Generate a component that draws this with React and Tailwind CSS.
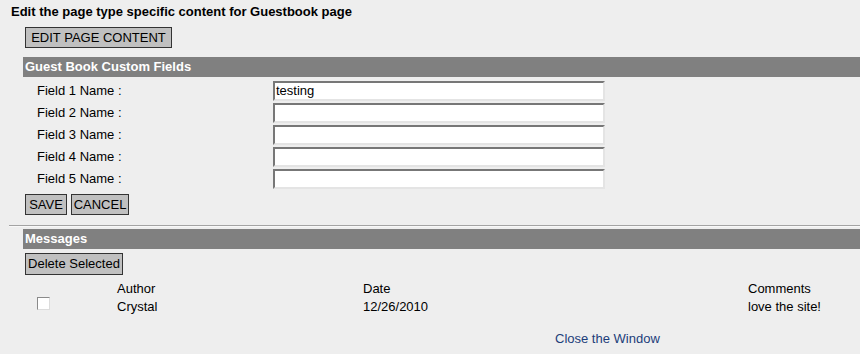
import React from "react";

const btn =
  "h-[21px] border border-[#333333] bg-[#c0c0c0] text-[13px] leading-[19px] text-black text-center";

function Field({ label, value }) {
  return (
    <div className="flex h-[20px] items-center">
      <div className="w-[273px] pb-[2px] pl-[37px] leading-[15px]">{label}</div>
      <div className="box-border h-[20px] w-[332px] border-2 border-t-[#777777] border-l-[#777777] border-b-[#e4e4e4] border-r-[#e4e4e4] bg-white pl-[1px] leading-[16px]">
        {value}
      </div>
    </div>
  );
}

function Bar({ children }) {
  return (
    <div className="ml-[23px] h-[20px] bg-[#808080] pl-[2px] font-bold leading-[20px] text-white">
      {children}
    </div>
  );
}

export default function App() {
  return (
    <div className="min-h-[354px] w-[860px] bg-[#eeeeee] font-['Liberation_Sans',Arial,sans-serif] text-[13px] text-black">
      <div className="pt-[4px] pl-[11px] font-bold leading-[15px]">
        Edit the page type specific content for Guestbook page
      </div>
      <div className="mt-[8px] pl-[25px]">
        <button className={btn + " w-[147px]"}>EDIT PAGE CONTENT</button>
      </div>
      <div className="mt-[9px]">
        <Bar>Guest Book Custom Fields</Bar>
      </div>
      <div className="mt-[4px] flex flex-col gap-[2px]">
        <Field label="Field 1 Name :" value="testing" />
        <Field label="Field 2 Name :" value="" />
        <Field label="Field 3 Name :" value="" />
        <Field label="Field 4 Name :" value="" />
        <Field label="Field 5 Name :" value="" />
      </div>
      <div className="mt-[5px] flex gap-[4px] pl-[25px]">
        <button className={btn + " w-[42px]"}>SAVE</button>
        <button className={btn + " w-[58px]"}>CANCEL</button>
      </div>
      <div className="ml-[9px] mt-[10px] h-[2px] border-t border-t-[#a3a3a3] border-b border-b-[#f8f8f8]" />
      <div className="mt-[2px]">
        <Bar>Messages</Bar>
      </div>
      <div className="mt-[4px] pl-[25px]">
        <button className={btn + " h-[22px] w-[98px] leading-[20px]"}>Delete Selected</button>
      </div>
      <div className="mt-[5px] leading-[18px]">
        <div className="flex h-[18px]">
          <div className="w-[117px]" />
          <div className="w-[246px]">Author</div>
          <div className="w-[385px]">Date</div>
          <div>Comments</div>
        </div>
        <div className="flex h-[18px]">
          <div className="w-[117px] pl-[37px]">
            <div className="mt-[-1px] h-[13px] w-[13px] border border-t-[#8a8a8a] border-l-[#8a8a8a] border-b-[#dcdcdc] border-r-[#dcdcdc] bg-white" />
          </div>
          <div className="w-[246px]">Crystal</div>
          <div className="w-[385px]">12/26/2010</div>
          <div>love the site!</div>
        </div>
      </div>
      <div className="mt-[15px] pl-[555px] leading-[15px] text-[#1c3d7a]">
        Close the Window
      </div>
    </div>
  );
}
